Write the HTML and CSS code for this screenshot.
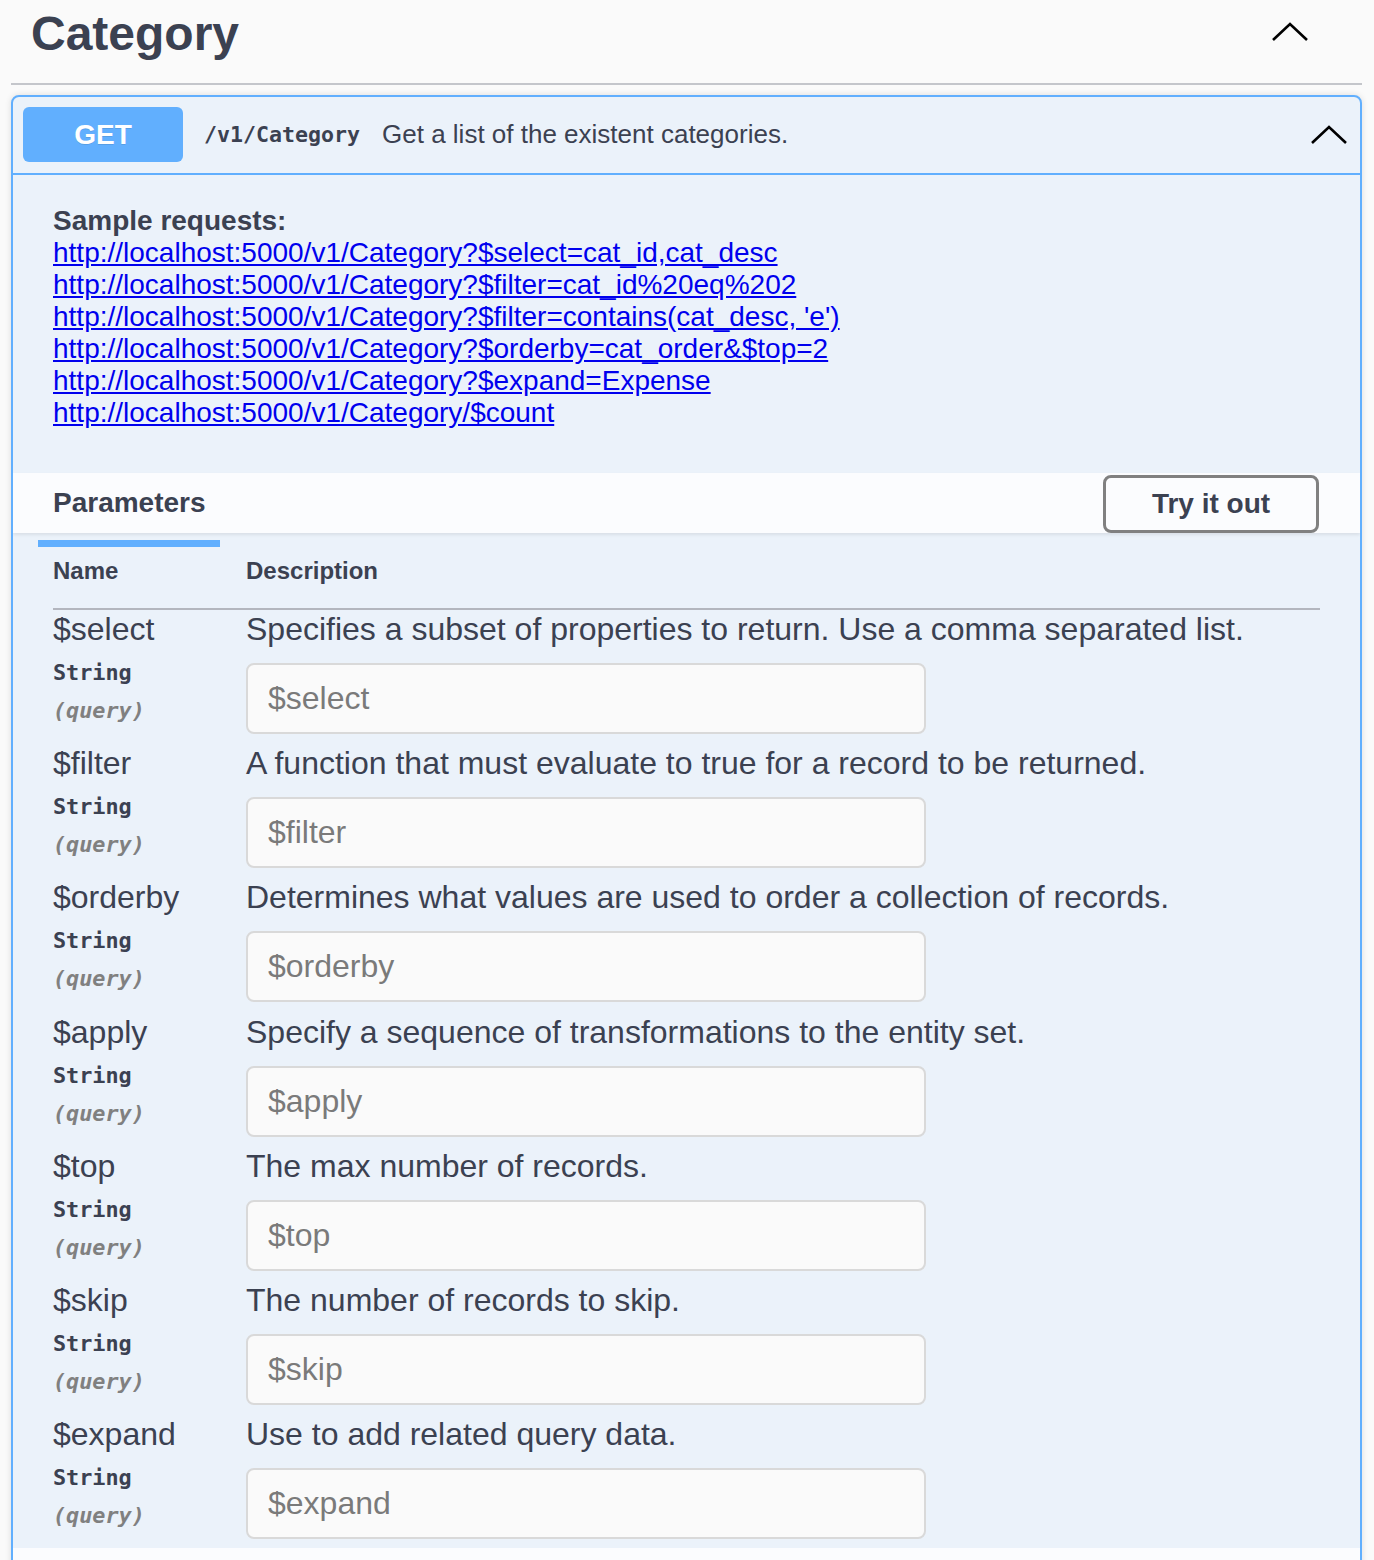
FILE: index.html
```html
<!DOCTYPE html>
<html>
<head>
<meta charset="utf-8">
<link rel="stylesheet" href="styles.css">
</head>
<body>
<div class="page">
  <div class="tag">
    <h3 class="tag-title">Category</h3>
    <svg class="chev chev-tag" width="36" height="20" viewBox="0 0 36 20"><polyline points="1,18 18,2 35,18" fill="none" stroke="#000" stroke-width="2.6"/></svg>
  </div>

  <div class="opblock">
    <div class="summary">
      <span class="method">GET</span>
      <span class="path">/v1/Category</span>
      <span class="summary-desc">Get a list of the existent categories.</span>
      <svg class="chev chev-op" width="36" height="20" viewBox="0 0 36 20"><polyline points="1,18 18,2 35,18" fill="none" stroke="#000" stroke-width="2.6"/></svg>
    </div>

    <div class="content">
      <div class="description">
        <div class="sample-title">Sample requests:</div>
        <a href="#">http://localhost:5000/v1/Category?$select=cat_id,cat_desc</a><br>
        <a href="#">http://localhost:5000/v1/Category?$filter=cat_id%20eq%202</a><br>
        <a href="#">http://localhost:5000/v1/Category?$filter=contains(cat_desc, 'e')</a><br>
        <a href="#">http://localhost:5000/v1/Category?$orderby=cat_order&amp;$top=2</a><br>
        <a href="#">http://localhost:5000/v1/Category?$expand=Expense</a><br>
        <a href="#">http://localhost:5000/v1/Category/$count</a>
      </div>

      <div class="section-header">
        <span class="section-title">Parameters</span>
        <button class="try-out">Try it out</button>
      </div>
      <div class="tab-line"></div>

      <div class="params">
        <div class="params-head">
          <div class="col-name">Name</div>
          <div class="col-desc">Description</div>
        </div>

        <div class="param">
          <div class="col-name">
            <div class="p-name">$select</div>
            <div class="p-type">String</div>
            <div class="p-in">(query)</div>
          </div>
          <div class="col-desc">
            <div class="p-desc">Specifies a subset of properties to return. Use a comma separated list.</div>
            <input class="p-input" type="text" placeholder="$select">
          </div>
        </div>

        <div class="param">
          <div class="col-name">
            <div class="p-name">$filter</div>
            <div class="p-type">String</div>
            <div class="p-in">(query)</div>
          </div>
          <div class="col-desc">
            <div class="p-desc">A function that must evaluate to true for a record to be returned.</div>
            <input class="p-input" type="text" placeholder="$filter">
          </div>
        </div>

        <div class="param">
          <div class="col-name">
            <div class="p-name">$orderby</div>
            <div class="p-type">String</div>
            <div class="p-in">(query)</div>
          </div>
          <div class="col-desc">
            <div class="p-desc">Determines what values are used to order a collection of records.</div>
            <input class="p-input" type="text" placeholder="$orderby">
          </div>
        </div>

        <div class="param">
          <div class="col-name">
            <div class="p-name">$apply</div>
            <div class="p-type">String</div>
            <div class="p-in">(query)</div>
          </div>
          <div class="col-desc">
            <div class="p-desc">Specify a sequence of transformations to the entity set.</div>
            <input class="p-input" type="text" placeholder="$apply">
          </div>
        </div>

        <div class="param">
          <div class="col-name">
            <div class="p-name">$top</div>
            <div class="p-type">String</div>
            <div class="p-in">(query)</div>
          </div>
          <div class="col-desc">
            <div class="p-desc">The max number of records.</div>
            <input class="p-input" type="text" placeholder="$top">
          </div>
        </div>

        <div class="param">
          <div class="col-name">
            <div class="p-name">$skip</div>
            <div class="p-type">String</div>
            <div class="p-in">(query)</div>
          </div>
          <div class="col-desc">
            <div class="p-desc">The number of records to skip.</div>
            <input class="p-input" type="text" placeholder="$skip">
          </div>
        </div>

        <div class="param">
          <div class="col-name">
            <div class="p-name">$expand</div>
            <div class="p-type">String</div>
            <div class="p-in">(query)</div>
          </div>
          <div class="col-desc">
            <div class="p-desc">Use to add related query data.</div>
            <input class="p-input" type="text" placeholder="$expand">
          </div>
        </div>
      </div>

      <div class="responses-band"></div>
    </div>
  </div>
</div>
</body>
</html>
```

FILE: styles.css
```css
* { box-sizing: border-box; }
html, body {
  margin: 0;
  padding: 0;
  background: #fafafa;
  font-family: "Liberation Sans", Arial, sans-serif;
  color: #3b4151;
}
.page {
  width: 1351px;
  margin-left: 11px;
}
.tag {
  display: flex;
  align-items: center;
  justify-content: space-between;
  padding: 6px 54px 22px 20px;
  border-bottom: 2px solid #c4c6cb;
  margin-bottom: 10px;
}
.tag-title {
  margin: 0;
  font-size: 48px;
  line-height: 55px;
  font-weight: 700;
  color: #3b4151;
}
.chev { display: block; }
.chev-tag { margin-top: -4px; }
.opblock {
  border: 2px solid #61affe;
  border-radius: 8px;
  background: #ebf2fa;
  box-shadow: 0 0 6px rgba(0,0,0,.12);
  overflow: hidden;
}
.summary {
  display: flex;
  align-items: center;
  padding: 10px 13px 11px 10px;
  border-bottom: 2px solid #61affe;
}
.method {
  width: 160px;
  height: 55px;
  border-radius: 6px;
  background: #61affe;
  color: #fff;
  font-weight: 700;
  font-size: 28px;
  display: flex;
  align-items: center;
  justify-content: center;
  text-shadow: 0 1px 0 rgba(0,0,0,.1);
}
.path {
  margin-left: 21px;
  font-family: "DejaVu Sans Mono", monospace;
  font-weight: 700;
  font-size: 21.6px;
  color: #3b4151;
}
.summary-desc {
  margin-left: 22px;
  font-size: 26px;
  color: #3b4151;
  flex: 1;
}
.chev-op { margin-top: 1px; }
.description {
  padding: 30px 40px 44px 40px;
  font-size: 28px;
  line-height: 32px;
}
.sample-title {
  font-weight: 700;
}
.description a {
  color: #0000ee;
  text-decoration: underline;
}
.section-header {
  display: flex;
  align-items: center;
  justify-content: space-between;
  height: 60px;
  padding: 0 41px 0 40px;
  background: #fbfcfe;
  box-shadow: 0 2px 3px rgba(0,0,0,.08);
}
.section-title {
  font-size: 28px;
  font-weight: 700;
}
.try-out {
  width: 216px;
  height: 58px;
  margin-top: 1px;
  border: 3px solid #808080;
  border-radius: 8px;
  background: transparent;
  font-family: "Liberation Sans", Arial, sans-serif;
  font-size: 28px;
  font-weight: 700;
  color: #3b4151;
}
.tab-line {
  width: 182px;
  height: 7px;
  margin: 7px 0 0 25px;
  background: #61affe;
}
.params {
  padding: 0 40px 9px 40px;
}
.params-head {
  display: flex;
  padding: 10px 0 23px;
  border-bottom: 2px solid #b3b6be;
  font-size: 24px;
  line-height: 28px;
  font-weight: 700;
}
.col-name { width: 193px; flex-shrink: 0; }
.col-desc { flex: 1; }
.param {
  display: flex;
  height: 134.2px;
  padding-top: 1px;
}
.param:last-child { height: 124px; }
.p-name {
  font-size: 32px;
  line-height: 37px;
}
.p-type {
  margin-top: 7px;
  font-family: "DejaVu Sans Mono", monospace;
  font-weight: 700;
  font-size: 21.8px;
  line-height: 36px;
}
.p-in {
  font-family: "DejaVu Sans Mono", monospace;
  font-weight: 700;
  font-style: italic;
  font-size: 21.8px;
  line-height: 40px;
  color: #808080;
}
.p-desc {
  font-size: 32px;
  line-height: 37px;
}
.p-input {
  display: block;
  margin-top: 15px;
  width: 680px;
  height: 71px;
  padding: 0 20px;
  border: 2px solid #d9d9d9;
  border-radius: 8px;
  background: #fafafa;
  font-family: "Liberation Sans", Arial, sans-serif;
  font-size: 32px;
  color: #3b4151;
  outline: none;
}
.p-input::placeholder { color: #7a7a7a; }
.responses-band {
  height: 60px;
  background: #fbfcfe;
}
```
